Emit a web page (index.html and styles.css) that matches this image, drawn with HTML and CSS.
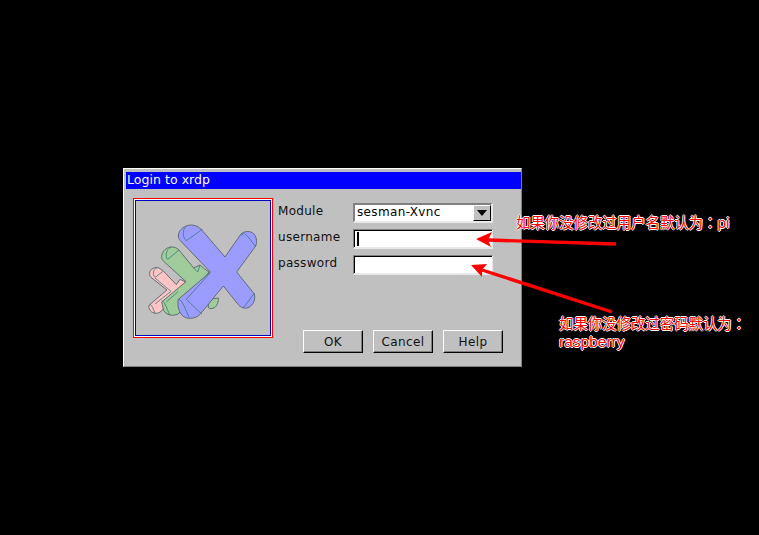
FILE: index.html
```html
<!DOCTYPE html>
<html lang="en">
<head>
<meta charset="utf-8">
<title>Login to xrdp</title>
<link rel="stylesheet" href="styles.css">
</head>
<body>
<main class="dialog">
  <header class="titlebar">Login to xrdp</header>
  <div class="content">
    <div class="logo-frame">
      <div class="logo-inner">
        <svg class="logo" viewBox="0 0 345 330" aria-hidden="true">
          <g class="pink">
            <path d="M14 172C14 160 28 152 42 156L54 164L94 206L105 190L122 198L100 232L48 286C40 294 24 294 16 284C10 276 10 272 14 266L66 222L18 184C14 180 14 176 14 172Z"/>
            <path class="inner" d="M36 155C24 160 22 176 30 184M30 184L54 166M30 186L78 226L30 264M14 264C22 268 26 282 30 292"/>
          </g>
          <g class="green">
            <path d="M190 275C205 285 222 268 220 246L190 250Z"/>
            <path d="M50 122C50 104 66 92 84 93C96 94 102 102 110 112L146 156L165 147L178 158L192 168L124 262L104 290C92 302 66 300 56 284L50 258L123 197L56 136C52 132 50 128 50 122Z"/>
            <path class="inner" d="M78 94C62 100 60 122 68 130M68 130L102 102M146 156L158 168L165 147M50 254C60 256 66 280 74 296M64 258L100 226"/>
          </g>
          <g class="blue">
            <path d="M100 60C100 42 118 27 140 27C156 28 166 36 174 46L240 123L288 54C296 46 312 44 322 50C334 58 338 76 332 90L275 168L328 234C332 250 326 266 312 274C298 280 286 274 280 266L235 210L166 294C156 306 132 312 116 302C102 292 96 270 100 250L196 168L106 74C102 70 100 66 100 60Z"/>
            <path class="inner" d="M124 30C112 38 112 66 124 74L172 40M100 250C112 250 122 282 132 304M124 250L170 294M124 250L196 170M298 52C312 62 322 80 332 92M296 50L290 60M328 232L296 274"/>
          </g>
        </svg>
      </div>
    </div>
    <div class="panel">
      <div class="form">
        <label class="field-label">Module</label>
        <div class="sunken select">
          <span class="select-value">sesman-Xvnc</span>
          <span class="select-button"><span class="select-arrow"></span></span>
        </div>
        <label class="field-label">username</label>
        <div class="sunken input"><span class="caret"></span></div>
        <label class="field-label">password</label>
        <div class="sunken input"></div>
      </div>
      <div class="buttons">
        <div class="button">OK</div>
        <div class="button">Cancel</div>
        <div class="button">Help</div>
      </div>
    </div>
  </div>
</main>
<svg class="arrows" viewBox="0 0 759 535" aria-hidden="true">
  <path class="arrow-shaft" d="M616 244L488 240"/>
  <path class="arrow-head" d="M476 239L492 232L488 240L491 247Z"/>
  <path class="arrow-shaft" d="M612 312L482 270"/>
  <path class="arrow-head" d="M471 265L487 264L482 270L482 277Z"/>
</svg>
<p class="note note-user">如果你没修改过用户名默认为<span class="colon">：</span><span class="latin">pi</span></p>
<p class="note note-pass">如果你没修改过密码默认为<span class="colon">：</span><br><span class="latin">raspberry</span></p>
</body>
</html>
```
FILE: styles.css
```css
* { box-sizing: border-box; }
html, body { margin: 0; height: 100%; }
body {
  background: #000;
  overflow: hidden;
  font-family: "DejaVu Sans", sans-serif;
  font-size: 12px;
  color: #000;
}
.dialog {
  position: absolute;
  left: 123px;
  top: 168px;
  width: 399px;
  height: 199px;
  display: flex;
  flex-direction: column;
  padding: 3px 0 2px 2px;
  background: #c0c0c0;
  border-top: 1px solid #fff;
  border-left: 1px solid #fff;
  border-right: 1px solid #808080;
  border-bottom: 1px solid #808080;
}
.titlebar {
  height: 17px;
  line-height: 16px;
  padding-left: 1px;
  background: #0000ff;
  color: #fff;
  font-size: 12.5px;
  letter-spacing: 0.05px;
}
.content {
  flex: 1;
  display: flex;
  padding: 9px 0 0 7px;
}
.logo-frame {
  width: 140px;
  height: 140px;
  padding: 1px;
  border: 1px solid #ff0000;
  background: #fff;
}
.logo-inner {
  width: 136px;
  height: 136px;
  border: 1px solid #0000c0;
  background: #c0c0c0;
}
.logo {
  display: block;
  width: 115px;
  height: 110px;
  margin: 15px 0 0 9px;
}
.logo path { stroke: #555f68; stroke-width: 2.6; stroke-linejoin: round; }
.logo .inner { fill: none; stroke: #2f747a; stroke-width: 2.2; }
.pink path { fill: #ffc4c4; }
.green path { fill: #a0cc9c; }
.blue path { fill: #9c9cff; }
.pink .inner, .green .inner, .blue .inner { fill: none; }
.panel {
  flex: 1;
  display: flex;
  flex-direction: column;
  padding: 5px 0 0 5px;
}
.form {
  display: grid;
  grid-template-columns: 75px 140px;
  grid-auto-rows: 20px;
  row-gap: 6px;
}
.field-label {
  line-height: 16px;
  letter-spacing: 0.3px;
  color: #111;
}
.sunken {
  background: #fff;
  border-top: 1px solid #808080;
  border-left: 1px solid #808080;
  border-right: 1px solid #e8e8e8;
  border-bottom: 2px solid #e8e8e8;
  box-shadow: inset 1px 1px 0 #000;
}
.select {
  display: flex;
  box-shadow: inset 1px 1px 0 #808080;
  border-right-width: 2px;
}
.select-value {
  flex: 1;
  line-height: 17px;
  padding-left: 3px;
  letter-spacing: 0.35px;
}
.select-button {
  width: 18px;
  margin-top: 1px;
  display: flex;
  align-items: center;
  justify-content: center;
  background: #c0c0c0;
  border: 1px solid;
  border-color: #fff #000 #000 #fff;
}
.select-arrow {
  width: 0;
  height: 0;
  border-left: 5px solid transparent;
  border-right: 5px solid transparent;
  border-top: 6px solid #000;
}
.input { padding: 2px 0 0 2px; }
.caret {
  display: block;
  width: 2px;
  height: 14px;
  margin-left: 1px;
  background: #000;
}
.buttons {
  display: flex;
  gap: 10px;
  margin-top: 55px;
  margin-left: 25px;
}
.button {
  width: 60px;
  height: 23px;
  line-height: 22px;
  text-align: center;
  background: #c0c0c0;
  border: 1px solid;
  border-color: #fff #000 #000 #fff;
  box-shadow: inset -1px -1px 0 #808080;
  letter-spacing: 0.35px;
  color: #111;
}
.arrows {
  position: absolute;
  left: 0;
  top: 0;
  width: 759px;
  height: 535px;
}
.arrow-shaft { stroke: #ff0000; stroke-width: 3.4; fill: none; }
.arrow-head { fill: #ff0000; }
.note {
  position: absolute;
  margin: 0;
  font-family: "Noto Sans CJK SC", sans-serif;
  font-size: 14.4px;
  line-height: 18px;
  color: #ff0000;
  white-space: nowrap;
  text-shadow: 1px 0 0.6px #fff, -1px 0 0.6px #fff, 0 1px 0.6px #fff, 0 -1px 0.6px #fff;
}
.colon { font-family: "Noto Sans CJK TC", sans-serif; }
.latin {
  font-family: "Liberation Sans", sans-serif;
  font-size: 15.5px;
  line-height: 1;
}
.note-user { left: 516px; top: 213px; }
.note-pass { left: 559px; top: 314px; }
```
